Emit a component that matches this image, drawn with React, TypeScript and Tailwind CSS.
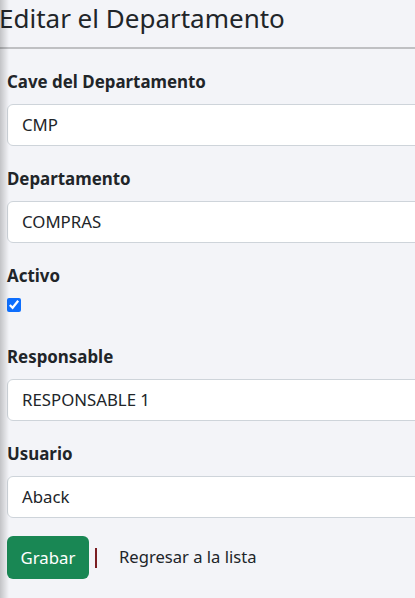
const FIELDS = [
    { label: 'Cave del Departamento', value: 'CMP' },
    { label: 'Departamento', value: 'COMPRAS' },
];

const FIELDS2 = [
    { label: 'Responsable', value: 'RESPONSABLE 1' },
    { label: 'Usuario', value: 'Aback' },
];

function Field({ label, value }: { label: string; value: string }) {
    return (
        <div className="mb-[20px]">
            <label className="block text-[16.9px] leading-[26px] font-bold text-[#212529] mb-[9px]">{label}</label>
            <div className="h-[42px] w-[460px] rounded-[6px] border border-[#ced4da] bg-white px-[14px] flex items-center text-[16.8px] text-[#212529]">
                {value}
            </div>
        </div>
    );
}

export default function App() {
    return (
        <div
            className="relative w-full min-h-[598px] overflow-hidden bg-[#f3f4f8]"
            style={{ fontFamily: '"Noto Sans", "Open Sans", sans-serif' }}
        >
            {/* left edge shadow */}
            <div className="absolute inset-y-0 left-0 w-[9px] bg-gradient-to-r from-black/20 to-transparent pointer-events-none" />

            {/* Title */}
            <h2 className="text-[26px] leading-[34px] pt-[1px] text-[#212529] -ml-[1px]">Editar el Departamento</h2>
            <hr className="mt-[12px] border-t-2 border-[#bfc0c3]" />

            <form className="px-[7px] pt-[20px]">
                {FIELDS.map((f) => (
                    <Field key={f.label} {...f} />
                ))}

                {/* Activo */}
                <div className="mb-[20px]">
                    <label className="block text-[16.9px] leading-[26px] font-bold text-[#212529] mb-[9px]">Activo</label>
                    <input type="checkbox" defaultChecked className="block w-[14px] h-[14px] accent-[#0d6efd] m-0" />
                </div>
                <div className="h-[12px]" />

                {FIELDS2.map((f) => (
                    <Field key={f.label} {...f} />
                ))}

                {/* Actions */}
                <div className="flex items-center -mt-[2px]">
                    <button
                        type="button"
                        className="h-[43px] w-[82px] rounded-[6px] bg-[#198754] text-white text-[16.8px]"
                    >
                        Grabar
                    </button>
                    <span className="ml-[6px] w-[2px] h-[20px] bg-[#7a1e22]" />
                    <a className="ml-[22px] text-[16.6px] text-[#212529]">Regresar a la lista</a>
                </div>
            </form>
        </div>
    );
}
